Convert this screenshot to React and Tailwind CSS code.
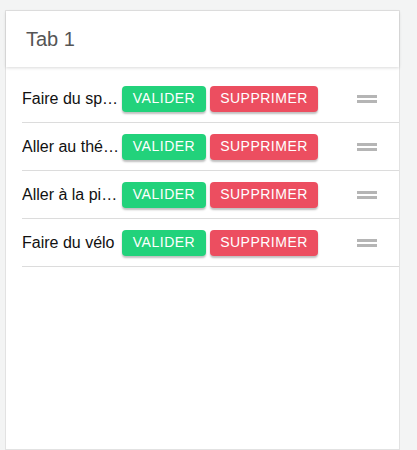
const items = ['Faire du sport', 'Aller au théâtre', 'Aller à la piscine', 'Faire du vélo']

function DragHandle() {
  return (
    <div className="flex flex-col gap-[2px] w-5">
      <div className="h-[3px] bg-[#b5b5b5]" />
      <div className="h-[3px] bg-[#b5b5b5]" />
    </div>
  )
}

export default function App() {
  return (
    <div className="min-h-[450px] bg-[#f3f4f4] pt-[10px] pl-[5px] pr-[17px] font-['Liberation_Sans',Arial,sans-serif]">
      <div className="bg-white border border-[#e2e2e2] h-[440px] flex flex-col">
        {/* Header */}
        <div className="h-[56px] flex items-center pl-[20px] shadow-[0_1px_3px_rgba(0,0,0,0.15)] relative z-10">
          <span className="text-[20px] text-[#555]">Tab 1</span>
        </div>

        {/* List */}
        <div className="pt-[8px] pl-[16px]">
          {items.map(item => (
            <div key={item} className="h-[48px] flex items-center border-b border-[#dcdcdc]">
              <span className="w-[97px] truncate text-[16px] text-[#111] shrink-0">{item}</span>
              <button className="ml-[3px] h-[26px] w-[84px] rounded-[4px] bg-[#22d27b] text-white text-[14px] tracking-[0.5px] shadow-[0_2px_2px_rgba(0,0,0,0.25)]">
                VALIDER
              </button>
              <button className="ml-[4px] h-[26px] w-[108px] rounded-[4px] bg-[#ec4e60] text-white text-[14px] tracking-[0.5px] shadow-[0_2px_2px_rgba(0,0,0,0.25)]">
                SUPPRIMER
              </button>
              <div className="ml-[39px]">
                <DragHandle />
              </div>
            </div>
          ))}
        </div>
      </div>
    </div>
  )
}
